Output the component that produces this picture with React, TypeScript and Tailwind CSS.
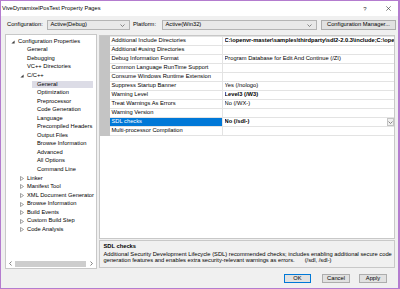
import React from 'react';

type TreeItem = { label: string; level: 0 | 1 | 2; toggle?: 'open' | 'closed'; selected?: boolean };

const tree: TreeItem[] = [
  { label: 'Configuration Properties', level: 0, toggle: 'open' },
  { label: 'General', level: 1 },
  { label: 'Debugging', level: 1 },
  { label: 'VC++ Directories', level: 1 },
  { label: 'C/C++', level: 1, toggle: 'open' },
  { label: 'General', level: 2, selected: true },
  { label: 'Optimization', level: 2 },
  { label: 'Preprocessor', level: 2 },
  { label: 'Code Generation', level: 2 },
  { label: 'Language', level: 2 },
  { label: 'Precompiled Headers', level: 2 },
  { label: 'Output Files', level: 2 },
  { label: 'Browse Information', level: 2 },
  { label: 'Advanced', level: 2 },
  { label: 'All Options', level: 2 },
  { label: 'Command Line', level: 2 },
  { label: 'Linker', level: 1, toggle: 'closed' },
  { label: 'Manifest Tool', level: 1, toggle: 'closed' },
  { label: 'XML Document Generator', level: 1, toggle: 'closed' },
  { label: 'Browse Information', level: 1, toggle: 'closed' },
  { label: 'Build Events', level: 1, toggle: 'closed' },
  { label: 'Custom Build Step', level: 1, toggle: 'closed' },
  { label: 'Code Analysis', level: 1, toggle: 'closed' },
];

const indent = ['pl-[4.5px]', 'pl-[13.5px]', 'pl-[23.5px]'];

type Prop = { name: string; value?: string; bold?: boolean; selected?: boolean };

const props: Prop[] = [
  {
    name: 'Additional Include Directories',
    value: 'C:\\openvr-master\\samples\\thirdparty\\sdl2-2.0.3\\include;C:\\openvr-master\\headers;%(AdditionalIncludeDirectories)',
    bold: true,
  },
  { name: 'Additional #using Directories' },
  { name: 'Debug Information Format', value: 'Program Database for Edit And Continue (/ZI)' },
  { name: 'Common Language RunTime Support' },
  { name: 'Consume Windows Runtime Extension' },
  { name: 'Suppress Startup Banner', value: 'Yes (/nologo)' },
  { name: 'Warning Level', value: 'Level3 (/W3)', bold: true },
  { name: 'Treat Warnings As Errors', value: 'No (/WX-)' },
  { name: 'Warning Version' },
  { name: 'SDL checks', value: 'No (/sdl-)', bold: true, selected: true },
  { name: 'Multi-processor Compilation' },
];

const Chevron = () => (
  <svg width="5" height="3" viewBox="0 0 5 3" className="shrink-0">
    <path d="M0.5 0.5 L2.5 2.5 L4.5 0.5" fill="none" stroke="#6a6a6a" strokeWidth="0.8" />
  </svg>
);

const Toggle = ({ kind }: { kind?: 'open' | 'closed' }) => (
  <span className="w-[4px] h-[5px] mr-[3.5px] shrink-0 flex items-center justify-center">
    {kind === 'open' && (
      <svg width="4" height="4" viewBox="0 0 4 4">
        <polygon points="3.6,0.4 3.6,3.6 0.4,3.6" fill="#404040" />
      </svg>
    )}
    {kind === 'closed' && (
      <svg width="4" height="5" viewBox="0 0 4 5">
        <polygon points="0.5,0.5 3.5,2.5 0.5,4.5" fill="none" stroke="#7a7a7a" strokeWidth="0.7" />
      </svg>
    )}
  </span>
);

const Select = ({ label, width }: { label: string; width: string }) => (
  <div className={`${width} h-[10px] border border-[#b4b4b4] bg-[#e8e8e8] flex items-center justify-between pl-[2.5px] pr-[4px]`}>
    <span>{label}</span>
    <Chevron />
  </div>
);

export default function App() {
  return (
    <div
      className="w-[400px] h-[289px] border-t border-l border-b border-r-2 border-[#b47ccf] bg-[#f0f0f0] flex flex-col text-[5.75px] leading-none text-black overflow-hidden"
      style={{ fontFamily: '"Liberation Sans", Arial, sans-serif' }}
    >
      {/* title bar */}
      <div className="h-[15px] bg-white flex items-center pl-[1px] pr-[7.5px] shrink-0">
        <span className="text-[5.7px]">ViveDynamixelPosTest Property Pages</span>
        <span className="ml-auto text-[6px] text-[#333]">?</span>
        <svg width="5" height="5" viewBox="0 0 5 5" className="ml-[19px]">
          <path d="M0.3 0.3 L4.7 4.7 M4.7 0.3 L0.3 4.7" stroke="#333" strokeWidth="0.6" />
        </svg>
      </div>

      {/* configuration row */}
      <div className="flex items-center h-[10px] mt-[4px] pl-[6px] shrink-0">
        <span className="w-[40px]">Configuration:</span>
        <Select label="Active(Debug)" width="w-[83px]" />
        <span className="ml-[3px] w-[29px]">Platform:</span>
        <Select label="Active(Win32)" width="w-[155px]" />
        <button className="ml-[4px] w-[75px] h-[10px] border border-[#adadad] bg-[#e1e1e1] flex items-center justify-center">
          Configuration Manager...
        </button>
      </div>

      {/* main area */}
      <div className="flex mt-[4px] h-[235px] shrink-0">
        {/* tree */}
        <div className="ml-[4px] w-[92px] border border-[#c8c8c8] bg-white flex flex-col">
          <div className="pt-[2.4px] flex flex-col">
            {tree.map((t, i) => (
              <div key={i} className={`h-[8.56px] flex items-center ${indent[t.level]}`}>
                <Toggle kind={t.toggle} />
                {t.selected ? (
                  <span className="-ml-[5px] pl-[5px] w-[61px] h-[7px] flex items-center bg-[#dcdce6]">{t.label}</span>
                ) : (
                  <span className="whitespace-nowrap">{t.label}</span>
                )}
              </div>
            ))}
          </div>
          <div className="mt-auto mb-[1px] h-[7px] flex items-center">
            <span className="w-[9px] flex justify-center">
              <svg width="3" height="5" viewBox="0 0 3 5">
                <path d="M2.5 0.5 L0.6 2.5 L2.5 4.5" fill="none" stroke="#606060" strokeWidth="0.8" />
              </svg>
            </span>
            <div className="w-[71px] h-[6px] bg-[#cdcdcd]" />
            <span className="w-[10px] flex justify-center">
              <svg width="3" height="5" viewBox="0 0 3 5">
                <path d="M0.5 0.5 L2.4 2.5 L0.5 4.5" fill="none" stroke="#606060" strokeWidth="0.8" />
              </svg>
            </span>
          </div>
        </div>

        {/* right column */}
        <div className="ml-[2px] w-[296px] flex flex-col">
          <div className="mt-[1px] h-[204px] border border-[#c8c8c8] bg-white flex flex-col">
            <div className="h-[1px] flex shrink-0">
              <div className="w-[10px] bg-[#c4c4c4]" />
              <div className="flex-1 bg-[#e3e3e3]" />
            </div>
            {props.map((p, i) => (
              <div key={i} className="h-[9px] flex shrink-0">
                <div className="w-[10px] bg-[#c4c4c4]" />
                <div
                  className={`w-[113px] border-b border-r border-[#e3e3e3] flex items-center pl-[1.5px] whitespace-nowrap overflow-hidden ${
                    p.selected ? 'bg-[#0078d7] text-white' : ''
                  }`}
                >
                  {p.name}
                </div>
                <div className="flex-1 min-w-0 border-b border-[#e3e3e3] flex items-center pl-[1.5px]">
                  <span className={`whitespace-nowrap overflow-hidden flex-1 ${p.bold ? 'font-bold' : ''}`}>{p.value}</span>
                  {p.selected && (
                    <span className="w-[7px] h-[8px] mr-[0.5px] border border-[#c4c4c4] bg-[#f0f0f0] flex items-center justify-center">
                      <Chevron />
                    </span>
                  )}
                </div>
              </div>
            ))}
          </div>

          <div className="mt-[1px] h-[28px] border border-[#c8c8c8] bg-[#f0f0f0] pl-[3.5px] pt-[1.5px] flex flex-col">
            <div className="font-bold leading-[7px]">SDL checks</div>
            <div className="mt-[1px] leading-[6.7px] whitespace-nowrap">
              Additional Security Development Lifecycle (SDL) recommended checks; includes enabling additional secure code
            </div>
            <div className="leading-[6.7px] whitespace-nowrap">
              generation features and enables extra security-relevant warnings as errors.
              <span className="ml-[10px]">(/sdl, /sdl-)</span>
            </div>
          </div>
        </div>
      </div>

      {/* buttons */}
      <div className="mt-[5px] h-[9px] flex justify-end pr-[11px] shrink-0">
        <button className="w-[27px] h-[9px] border border-[#0078d7] bg-[#e1e1e1] flex items-center justify-center">OK</button>
        <button className="ml-[11px] w-[28px] h-[9px] border border-[#adadad] bg-[#e1e1e1] flex items-center justify-center">
          Cancel
        </button>
        <button className="ml-[9px] w-[28px] h-[9px] border border-[#adadad] bg-[#e1e1e1] flex items-center justify-center">
          Apply
        </button>
      </div>
    </div>
  );
}
